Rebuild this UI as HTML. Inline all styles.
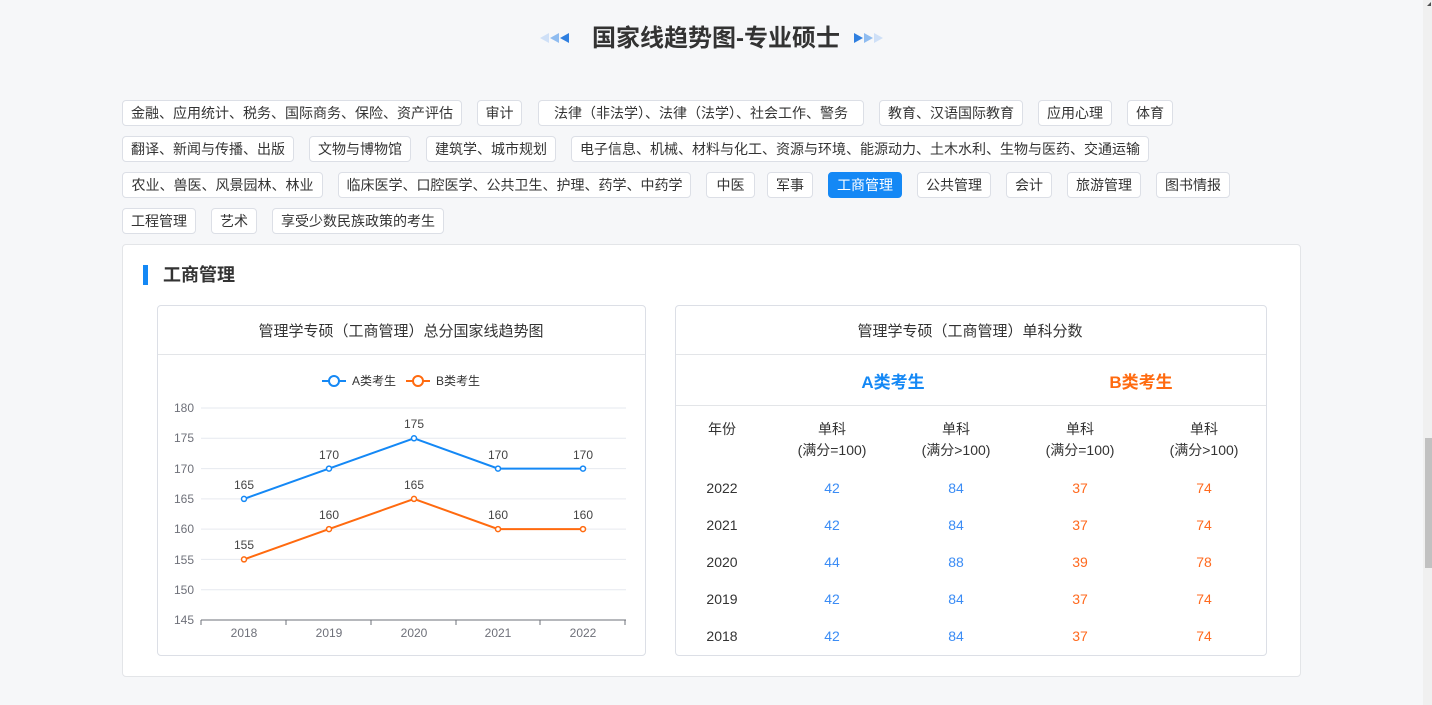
<!DOCTYPE html>
<html><head><meta charset="utf-8"><style>
body{margin:0;width:1432px;height:705px;background:#f6f7f9;font-family:"Liberation Sans","Noto Sans CJK SC",sans-serif;position:relative;overflow:hidden;color:#333}
.a{position:absolute}
.t{position:absolute;height:24px;line-height:24px;border:1px solid #dcdfe6;border-radius:4px;background:#fff;font-size:14px;text-align:center;color:#333;white-space:nowrap}
.t.on{background:#1488f5;border-color:#1488f5;color:#fff}
.c{position:absolute;text-align:center;font-size:14px;transform:translateX(-50%);white-space:nowrap}
</style></head><body>
<svg class="a" style="left:538px;top:31px" width="34" height="14"><polygon points="2,7 11,2 11,12" fill="#cfe0f7"/><polygon points="12,7 21,2 21,12" fill="#8fbcf0"/><polygon points="22,7 31,2 31,12" fill="#2f7fe0"/></svg>
<div class="a" style="left:0;width:1432px;top:22px;text-align:center;font-size:24px;font-weight:bold;color:#333;line-height:34px">国家线趋势图-专业硕士</div>
<svg class="a" style="left:852px;top:31px" width="34" height="14"><polygon points="2,2 11,7 2,12" fill="#2f7fe0"/><polygon points="12,2 21,7 12,12" fill="#8fbcf0"/><polygon points="22,2 31,7 22,12" fill="#cfe0f7"/></svg>

<div class="t" style="left:122px;top:100px;width:338px">金融、应用统计、税务、国际商务、保险、资产评估</div>
<div class="t" style="left:477px;top:100px;width:43px">审计</div>
<div class="t" style="left:538px;top:100px;width:324px">法律（非法学）、法律（法学）、社会工作、警务</div>
<div class="t" style="left:879px;top:100px;width:142px">教育、汉语国际教育</div>
<div class="t" style="left:1038px;top:100px;width:72px">应用心理</div>
<div class="t" style="left:1127px;top:100px;width:44px">体育</div>
<div class="t" style="left:122px;top:136px;width:170px">翻译、新闻与传播、出版</div>
<div class="t" style="left:309px;top:136px;width:100px">文物与博物馆</div>
<div class="t" style="left:426px;top:136px;width:128px">建筑学、城市规划</div>
<div class="t" style="left:571px;top:136px;width:576px">电子信息、机械、材料与化工、资源与环境、能源动力、土木水利、生物与医药、交通运输</div>
<div class="t" style="left:122px;top:172px;width:199px">农业、兽医、风景园林、林业</div>
<div class="t" style="left:338px;top:172px;width:351px">临床医学、口腔医学、公共卫生、护理、药学、中药学</div>
<div class="t" style="left:706px;top:172px;width:47px">中医</div>
<div class="t" style="left:767px;top:172px;width:44px">军事</div>
<div class="t on" style="left:828px;top:172px;width:72px">工商管理</div>
<div class="t" style="left:917px;top:172px;width:72px">公共管理</div>
<div class="t" style="left:1006px;top:172px;width:44px">会计</div>
<div class="t" style="left:1067px;top:172px;width:72px">旅游管理</div>
<div class="t" style="left:1156px;top:172px;width:72px">图书情报</div>
<div class="t" style="left:122px;top:208px;width:72px">工程管理</div>
<div class="t" style="left:211px;top:208px;width:44px">艺术</div>
<div class="t" style="left:272px;top:208px;width:170px">享受少数民族政策的考生</div>

<div class="a" style="left:122px;top:244px;width:1177px;height:431px;background:#fff;border:1px solid #e3e5e8;border-radius:4px"></div>
<div class="a" style="left:143px;top:265px;width:5px;height:20px;background:#1488f5"></div>
<div class="a" style="left:163px;top:262px;font-size:18px;font-weight:bold;line-height:26px;color:#333">工商管理</div>

<div class="a" style="left:157px;top:305px;width:487px;height:349px;border:1px solid #dcdfe6;border-radius:4px"></div>
<div class="a" style="left:158px;top:354px;width:487px;height:1px;background:#e3e5e8"></div>
<div class="c" style="left:401px;top:320px;font-size:15px">管理学专硕（工商管理）总分国家线趋势图</div>
<svg class="a" style="left:158px;top:356px" width="486" height="298" font-family="Liberation Sans" font-size="12">
<g stroke="#e6e9ef" stroke-width="1">
<line x1="43" y1="52" x2="468" y2="52"/><line x1="43" y1="82.3" x2="468" y2="82.3"/><line x1="43" y1="112.6" x2="468" y2="112.6"/><line x1="43" y1="142.9" x2="468" y2="142.9"/><line x1="43" y1="173.1" x2="468" y2="173.1"/><line x1="43" y1="203.4" x2="468" y2="203.4"/><line x1="43" y1="233.7" x2="468" y2="233.7"/>
</g>
<g stroke="#6e7079"><line x1="43" y1="264" x2="468" y2="264"/><line x1="43" y1="264" x2="43" y2="269"/><line x1="128" y1="264" x2="128" y2="269"/><line x1="213" y1="264" x2="213" y2="269"/><line x1="298" y1="264" x2="298" y2="269"/><line x1="382" y1="264" x2="382" y2="269"/><line x1="467" y1="264" x2="467" y2="269"/></g>
<g fill="#6e7079" text-anchor="end"><text x="36" y="56">180</text><text x="36" y="86">175</text><text x="36" y="117">170</text><text x="36" y="147">165</text><text x="36" y="177">160</text><text x="36" y="208">155</text><text x="36" y="238">150</text><text x="36" y="268">145</text></g>
<g fill="#6e7079" text-anchor="middle"><text x="86" y="281">2018</text><text x="171" y="281">2019</text><text x="256" y="281">2020</text><text x="340" y="281">2021</text><text x="425" y="281">2022</text></g>
<polyline points="86,142.9 171,112.6 256,82.3 340,112.6 425,112.6" fill="none" stroke="#1488f5" stroke-width="2"/>
<polyline points="86,203.4 171,173.1 256,142.9 340,173.1 425,173.1" fill="none" stroke="#ff6a0f" stroke-width="2"/>
<g fill="#fff" stroke="#1488f5" stroke-width="1.5"><circle cx="86" cy="142.9" r="2.5"/><circle cx="171" cy="112.6" r="2.5"/><circle cx="256" cy="82.3" r="2.5"/><circle cx="340" cy="112.6" r="2.5"/><circle cx="425" cy="112.6" r="2.5"/></g>
<g fill="#fff" stroke="#ff6a0f" stroke-width="1.5"><circle cx="86" cy="203.4" r="2.5"/><circle cx="171" cy="173.1" r="2.5"/><circle cx="256" cy="142.9" r="2.5"/><circle cx="340" cy="173.1" r="2.5"/><circle cx="425" cy="173.1" r="2.5"/></g>
<g fill="#444" text-anchor="middle"><text x="86" y="133">165</text><text x="171" y="103">170</text><text x="256" y="72">175</text><text x="340" y="103">170</text><text x="425" y="103">170</text>
<text x="86" y="193">155</text><text x="171" y="163">160</text><text x="256" y="133">165</text><text x="340" y="163">160</text><text x="425" y="163">160</text></g>
<line x1="164" y1="25" x2="188" y2="25" stroke="#1488f5" stroke-width="2"/><circle cx="176" cy="25" r="5" fill="#fff" stroke="#1488f5" stroke-width="2"/>
<text x="194" y="29" fill="#333" font-size="12" font-family="Liberation Sans,Noto Sans CJK SC">A类考生</text>
<line x1="248" y1="25" x2="272" y2="25" stroke="#ff6a0f" stroke-width="2"/><circle cx="260" cy="25" r="5" fill="#fff" stroke="#ff6a0f" stroke-width="2"/>
<text x="278" y="29" fill="#333" font-size="12" font-family="Liberation Sans,Noto Sans CJK SC">B类考生</text>
</svg>

<div class="a" style="left:675px;top:305px;width:590px;height:349px;border:1px solid #dcdfe6;border-radius:4px"></div>
<div class="a" style="left:676px;top:354px;width:590px;height:1px;background:#e3e5e8"></div>
<div class="a" style="left:676px;top:405px;width:590px;height:1px;background:#e3e5e8"></div>
<div class="c" style="left:970px;top:320px;font-size:15px">管理学专硕（工商管理）单科分数</div>
<div class="c" style="left:893px;top:368px;font-size:17px;font-weight:bold;color:#1488f5">A类考生</div>
<div class="c" style="left:1141px;top:368px;font-size:17px;font-weight:bold;color:#ff6a0f">B类考生</div>
<div class="c" style="left:722px;top:419px">年份</div>
<div class="c" style="left:832px;top:419px;line-height:21px">单科<br>(满分=100)</div>
<div class="c" style="left:956px;top:419px;line-height:21px">单科<br>(满分&gt;100)</div>
<div class="c" style="left:1080px;top:419px;line-height:21px">单科<br>(满分=100)</div>
<div class="c" style="left:1204px;top:419px;line-height:21px">单科<br>(满分&gt;100)</div>

<div class="c" style="left:722px;top:480px">2022</div><div class="c" style="left:832px;top:480px;color:#3b8cf5">42</div><div class="c" style="left:956px;top:480px;color:#3b8cf5">84</div><div class="c" style="left:1080px;top:480px;color:#ff6a1f">37</div><div class="c" style="left:1204px;top:480px;color:#ff6a1f">74</div>
<div class="c" style="left:722px;top:517px">2021</div><div class="c" style="left:832px;top:517px;color:#3b8cf5">42</div><div class="c" style="left:956px;top:517px;color:#3b8cf5">84</div><div class="c" style="left:1080px;top:517px;color:#ff6a1f">37</div><div class="c" style="left:1204px;top:517px;color:#ff6a1f">74</div>
<div class="c" style="left:722px;top:554px">2020</div><div class="c" style="left:832px;top:554px;color:#3b8cf5">44</div><div class="c" style="left:956px;top:554px;color:#3b8cf5">88</div><div class="c" style="left:1080px;top:554px;color:#ff6a1f">39</div><div class="c" style="left:1204px;top:554px;color:#ff6a1f">78</div>
<div class="c" style="left:722px;top:591px">2019</div><div class="c" style="left:832px;top:591px;color:#3b8cf5">42</div><div class="c" style="left:956px;top:591px;color:#3b8cf5">84</div><div class="c" style="left:1080px;top:591px;color:#ff6a1f">37</div><div class="c" style="left:1204px;top:591px;color:#ff6a1f">74</div>
<div class="c" style="left:722px;top:628px">2018</div><div class="c" style="left:832px;top:628px;color:#3b8cf5">42</div><div class="c" style="left:956px;top:628px;color:#3b8cf5">84</div><div class="c" style="left:1080px;top:628px;color:#ff6a1f">37</div><div class="c" style="left:1204px;top:628px;color:#ff6a1f">74</div>

<div class="a" style="left:1423px;top:0;width:9px;height:705px;background:#f0f0f0"></div>
<div class="a" style="left:1425px;top:438px;width:7px;height:130px;background:#c1c1c1"></div>
<svg class="a" style="left:1427px;top:2px" width="5" height="5"><polygon points="0,4 4,0 4,4" fill="#505050"/></svg>
</body></html>
